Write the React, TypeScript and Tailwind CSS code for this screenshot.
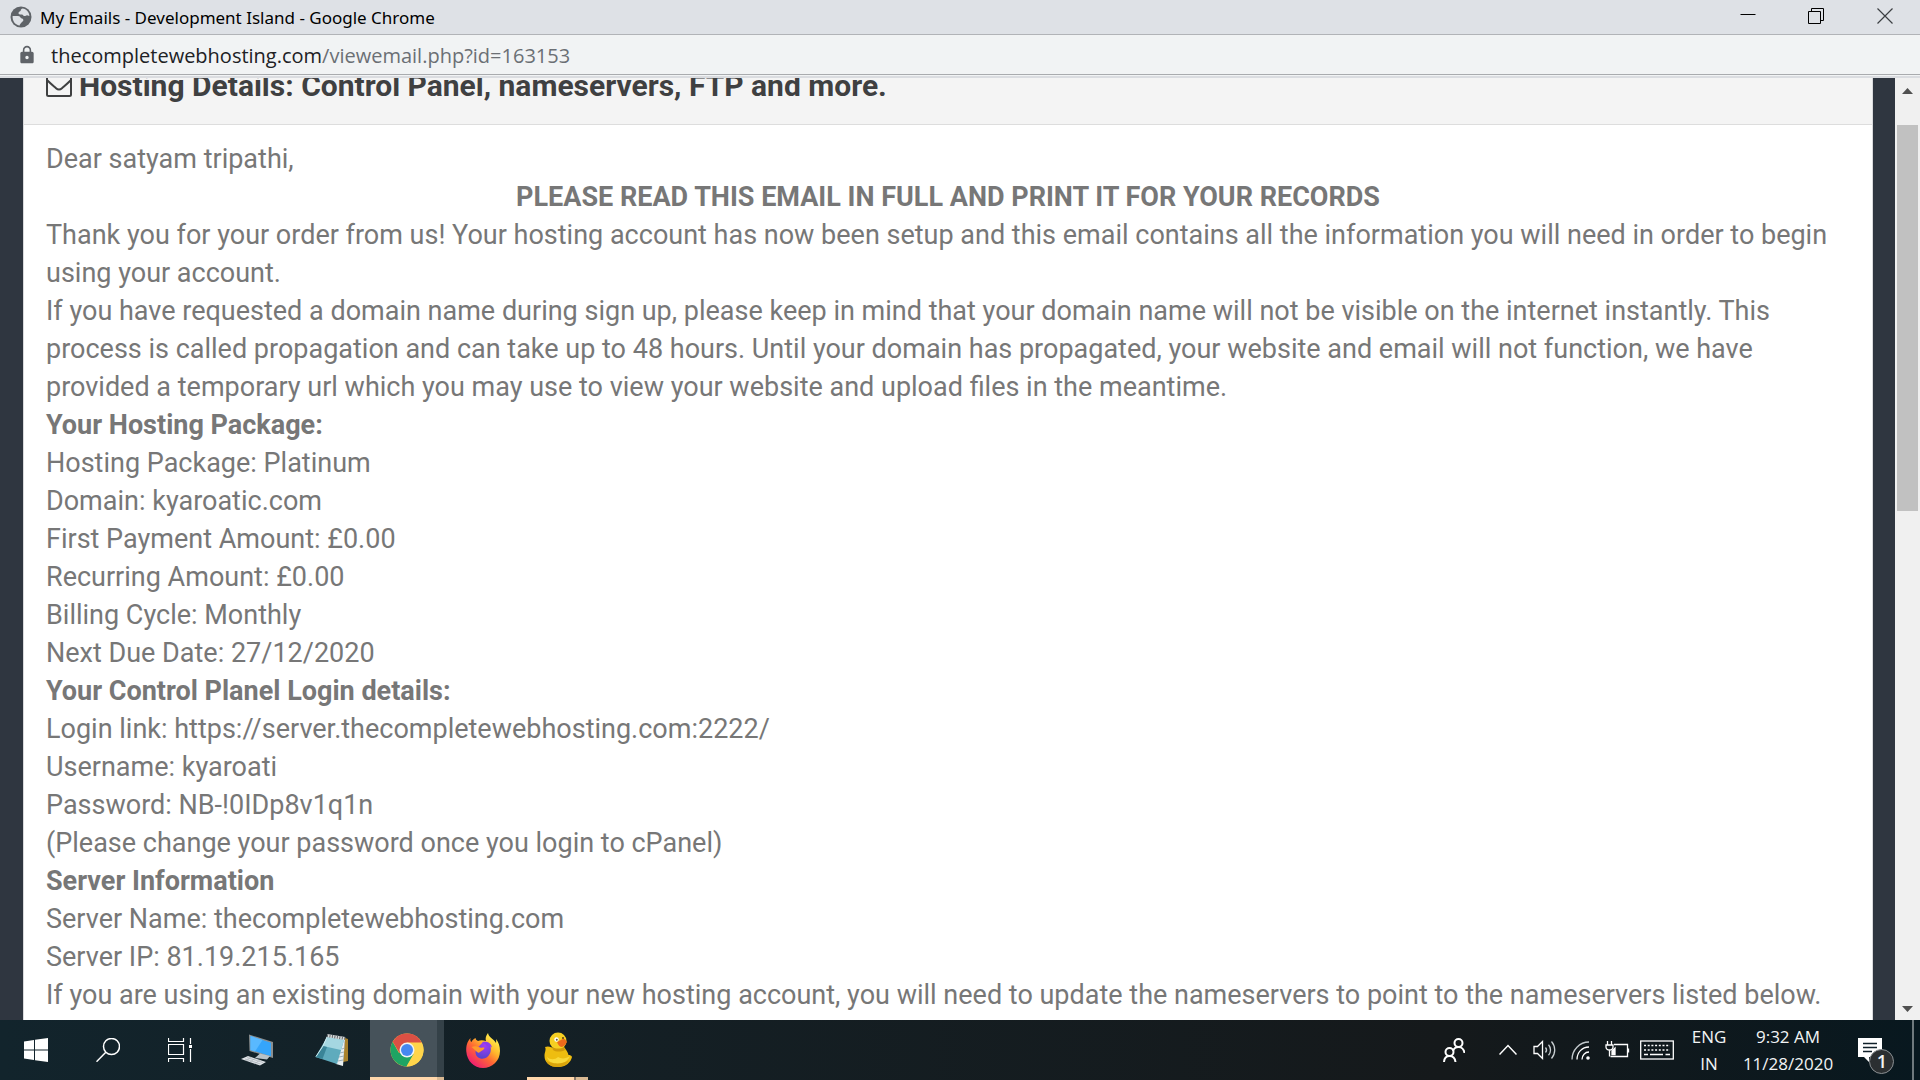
import type { ReactNode } from "react";
import { MdLock } from "react-icons/md";

function Globe() {
  return (
    <svg viewBox="0 0 22 22" className="size-[22px]" aria-hidden="true">
      <circle cx="11" cy="11" r="10.5" fill="#5f6368" />
      <path
        d="M2.600 10h5.400c1.600 0 2.200 1 2.700 1.800.5.800 2 .5 2.500 1.700.6 1.300-.4 2-1.200 2.500-.8.600-.9 1.200-1.500 1.800-.6.600-.7 1-.7 1.700C5.500 19 2.300 15.500 2.600 10zM12.500 2.600c-.9.500-1.700.6-1.700 1.700 0 1-1.200 1-1.800 1.600-.8.700-.6 2 .4 2.400 1 .3 1.500.1 2.500.1 1.300 0 1.300 1.700 2.600 1.700 1.200 0 1.700-1 2.600-.9l2.300.8C19.200 6.500 16.300 2.900 12.500 2.600z"
        fill="#dee1e6"
      />
    </svg>
  );
}

function Envelope() {
  return (
    <svg viewBox="0 0 26 22" className="h-[22px] w-[26px] shrink-0" fill="none" stroke="#3f4041" strokeWidth="2" aria-hidden="true">
      <rect x="1" y="1" width="24" height="20" rx="1.500" />
      <path d="M1.500 5.500c3 3 6 5.500 8.500 7.700 2 1.700 4 1.700 6 0 2.500-2.200 5.500-4.700 8.500-7.700" />
    </svg>
  );
}

function WindowsLogo() {
  return (
    <svg viewBox="0 0 24 24" className="size-6" fill="#fff" aria-hidden="true">
      <path d="M0 3.400 10 2v9.500H0zM11 1.800 24 0v11.500H11zM0 12.500h10V22L0 20.600zM11 12.500h13V24l-13-1.800z" />
    </svg>
  );
}

function SearchIcon() {
  return (
    <svg viewBox="0 0 24 24" className="size-6" fill="none" stroke="#fff" strokeWidth="1.500" aria-hidden="true">
      <circle cx="15.500" cy="8.500" r="8" />
      <path d="M9.800 14.200.5 23.700" />
    </svg>
  );
}

function TaskView() {
  return (
    <svg viewBox="0 0 24 24" className="size-6" fill="none" stroke="#fff" strokeWidth="1.200" aria-hidden="true">
      <path d="M.5 0v3.500h15V0M.5 24v-3.500h15V24M.5 6.500h15v10H.5zM22.500 0v6M22.500 11v13" />
      <rect x="21" y="7" width="3" height="3" fill="#fff" stroke="none" />
    </svg>
  );
}

function Computer() {
  return (
    <svg viewBox="0 0 32 32" className="size-8" aria-hidden="true">
      <path d="m8 .5 24 7.500v16L8.500 17z" fill="#8b8f90" />
      <path d="m9.500 2 20.500 6.700v13.600L9.500 16z" fill="#35a5fb" />
      <path d="m9.500 2 12 4L14 17.400 9.500 16z" fill="#59b9ff" />
      <path d="m19 19.500 10 2.500-3 3.500-12-1.500z" fill="#b9c2c8" />
      <path d="m7 22 18 6-6 3.500L0 25z" fill="#dfe3e7" />
      <path d="m6 23.500 16 5M4 25l15.500 5M10 23l-5 4M14 24.500 9 28M19 26l-5.500 3.800" stroke="#a9b0b6" strokeWidth=".7" />
    </svg>
  );
}

function Notepad() {
  return (
    <svg viewBox="0 0 34 32" className="h-8 w-[34px]" aria-hidden="true">
      <path d="m30 4 3 1v22L28 28z" fill="#a9822c" />
      <path d="m12 2 18 3-2 27-7-2z" fill="#e8eef0" />
      <path d="m27 15 2.500-1M25 19l4-1M24 23l5-1M23 27l5-1" stroke="#9fb0b8" />
      <path d="M12 3 29 6 22 30 .5 23z" fill="#5fabbd" />
      <path d="m12 3 17 3-3 10-18-4z" fill="#a5d7e1" />
      <path d="M8 12 .5 23l7 2L12 13z" fill="#3a8598" />
      <path d="m12 3-4 9-7 10.500" stroke="#d6eef2" fill="none" />
      <path d="m12 1.500 18 3" stroke="#d9dcdc" strokeWidth="3" />
      <path d="m12 1.500 18 3" stroke="#5d6468" strokeWidth="3" strokeDasharray="1 1.500" />
    </svg>
  );
}

function Chrome() {
  return (
    <svg viewBox="0 0 34 34" className="size-[34px]" aria-hidden="true">
      <circle cx="17" cy="17" r="16.500" fill="#ffd54b" />
      <path d="M2.700 8.700A16.500 16.500 0 0 0 16.500 33.500L24.200 21 17 17 9 20z" fill="#1fa463" />
      <path d="M2.700 8.700A16.500 16.500 0 0 1 32.200 10.500L17 10l-7.500 10z" fill="#dc5044" />
      <path d="M17 9.500h14.800A16.500 16.500 0 0 1 16.500 33.500L23.500 21z" fill="#ffd54b" />
      <circle cx="17" cy="17" r="7.500" fill="#f1f3f4" />
      <circle cx="17" cy="17" r="6" fill="#4688f1" />
    </svg>
  );
}

function Firefox() {
  return (
    <svg viewBox="0 0 34 35" className="h-[35px] w-[34px]" aria-hidden="true">
      <defs>
        <linearGradient id="ffBody" x1=".85" y1=".1" x2=".2" y2=".9">
          <stop offset="0" stopColor="#fff44f" />
          <stop offset=".35" stopColor="#ffb62b" />
          <stop offset=".6" stopColor="#ff6a33" />
          <stop offset="1" stopColor="#f0206f" />
        </linearGradient>
        <radialGradient id="ffGlobe" cx=".6" cy=".2" r=".9">
          <stop offset="0" stopColor="#a63cf5" />
          <stop offset="1" stopColor="#4b45c8" />
        </radialGradient>
      </defs>
      <path
        d="M22 0c-2 3-3 5-2 8-3-1-6-1-8 0-2-1-2-1.500-2.500-3C7 6 6 8 5.500 9 4.500 8.500 4 7 4.500 5 1 9 0 13 .3 18.500 1 28 8 35 17 35s17-7 17-17c0-5-1.500-9-4-12 .3 2 .2 3 0 4C27 5 23 5 22 0z"
        fill="url(#ffBody)"
      />
      <path d="M17 9c6-1 9 4 7.500 10-1.500 5-6 7.500-10 6.500-4-1-6-5-4.500-9z" fill="url(#ffGlobe)" />
      <path d="M5.500 14c3-1.500 6-.5 8.500.5 2 .8 4-.5 4.500.5-.5 2-3 2.500-4.500 4-1.500 1-2 1-4-1s-3-3-4.500-4z" fill="#ff9a2c" />
      <path d="M16 9.500c4-2 9 0 10 5-2-2-4-2-5-1.500-1-2-3-3-5-3.500z" fill="#8a3cf0" />
    </svg>
  );
}

function Duck() {
  return (
    <svg viewBox="0 0 28 36" className="h-9 w-7" aria-hidden="true">
      <path d="M1 15c3-1.500 7 0 9 1.500L20 15c2 3 4 5 4.500 8 1.500 0 3 .5 3.500 2-1 5-6 10-14 10C5 35 .5 30 .5 24c0-4 2-6 .5-9z" fill="#eebd10" />
      <path d="M3 25c3 3 8 3 11 0 3 2 8 2 12-1-2 5-7 8-13 8-5 0-9-3-10-7z" fill="#f9d93a" />
      <path d="M2 28c4 4 17 5 23 0-2 5-6 7-12 7S3 32 2 28z" fill="#d9a40b" />
      <circle cx="14" cy="9" r="8.500" fill="#f6cf22" />
      <path d="M8 15c3 2 9 2 12 0l1 3c-4 2-9 2-12 0z" fill="#d19a0a" />
      <path d="M13 10c3-1 4-3 7-3 1.500 0 2 2 3 3-1 1.500-2 4-5 5-2 0-4-2-5-5z" fill="#ee6a1b" />
      <circle cx="12.500" cy="7.500" r="2.200" fill="#fff" />
      <circle cx="12.800" cy="7.800" r="1" fill="#6a5a3a" />
      <circle cx="19" cy="6" r="1" fill="#5b3a10" />
    </svg>
  );
}

function TaskButton({ label, children }: { label: string; children: ReactNode }) {
  return (
    <button aria-label={label} className="flex h-full w-[73px] items-center justify-center">
      {children}
    </button>
  );
}

function Taskbar() {
  return (
    <footer className="flex h-[60px] shrink-0 justify-between bg-linear-to-r from-[#12242c] via-[#15191b] via-75% to-[#08181f] text-[#f2f4f5]">
      <nav aria-label="Taskbar" className="flex">
        <button aria-label="Start" className="flex w-[72px] items-center justify-center"><WindowsLogo /></button>
        <button aria-label="Search" className="flex w-[72px] items-center justify-center"><SearchIcon /></button>
        <button aria-label="Task View" className="flex w-[72px] items-center justify-center"><TaskView /></button>
        <div className="ml-1 flex gap-[2px]">
          <TaskButton label="This PC"><Computer /></TaskButton>
          <TaskButton label="Notepad"><Notepad /></TaskButton>
          <button aria-label="Google Chrome" className="flex w-[74px] flex-col bg-linear-to-r from-[#46525a] from-90% to-[#344148] to-90%">
            <span className="flex w-full flex-1 items-center justify-center pt-[3px]"><Chrome /></span>
            <span className="h-[3px] w-full bg-linear-to-r from-[#ffd7ab] from-90% to-[#d9b993] to-90%" />
          </button>
          <TaskButton label="Firefox"><Firefox /></TaskButton>
          <button aria-label="Cyberduck" className="flex w-[73px] flex-col items-center">
            <span className="flex flex-1 items-center justify-center pt-[3px]"><Duck /></span>
            <span className="flex h-[3px] w-[61px]">
              <span className="flex-1 bg-[#ffd7ab]" />
              <span className="w-[2px] bg-[#86776a]" />
              <span className="w-3 bg-[#d9b993]" />
            </span>
          </button>
        </div>
      </nav>

      <div className="flex font-['Open_Sans','Noto_Sans',sans-serif] text-[17px] leading-[27px]">
        <button aria-label="People" className="mr-3 flex w-12 items-center justify-center">
          <svg viewBox="0 0 22 24" className="h-6 w-[22px]" fill="none" stroke="#fff" strokeWidth="2" aria-hidden="true">
            <circle cx="15.500" cy="5" r="4" />
            <circle cx="6.500" cy="14" r="4" />
            <path d="M10 13c1-3 3-4 5.500-4s5.500 2 6 6M1 24c.3-4 2.500-6 5.500-6s5.500 2 6 6" />
          </svg>
        </button>
        <button aria-label="Show hidden icons" className="flex w-9 items-center justify-center">
          <svg viewBox="0 0 18 12" className="h-3 w-[18px]" fill="none" stroke="#fff" strokeWidth="1.500" aria-hidden="true">
            <path d="m.5 10.500 8.500-9 8.500 9" />
          </svg>
        </button>
        <button aria-label="Volume" className="flex w-9 items-center justify-center">
          <svg viewBox="0 0 23 20" className="h-5 w-[23px]" fill="none" stroke="#fff" strokeWidth="1.300" aria-hidden="true">
            <path d="M1 6.500h3.500L9.500 1.500v17l-5-5H1z" />
            <path d="M12.500 7.500c1.300 1.500 1.300 3.500 0 5M15.500 4.800c2.700 3 2.700 7.400 0 10.400M18.500 1.500c4.300 5 4.300 12 0 17" stroke="#c9cfd2" />
          </svg>
        </button>
        <button aria-label="Wi-Fi" className="flex w-9 items-center justify-center">
          <svg viewBox="0 0 19 19" className="size-[19px]" fill="none" stroke="#fff" strokeWidth="1.300" aria-hidden="true">
            <path d="M1 18.500C1 9 8.500 1 18 1" stroke="#c3cacd" />
            <path d="M6 18.500C6 11.500 11 6 18 6M11 18.500c0-4 3-7.500 7-7.500" />
            <circle cx="17" cy="17" r="1.800" fill="#fff" stroke="none" />
          </svg>
        </button>
        <button aria-label="Battery" className="flex w-[38px] items-center justify-center">
          <svg viewBox="0 0 25 18" className="h-[18px] w-[25px]" fill="none" stroke="#fff" strokeWidth="1.300" aria-hidden="true">
            <path d="M9 3.500h13.500v12H5.500M23.500 7.500v4M2.500 0v4M6.500 0v4M1 4h7v2c0 2-1.500 3-3.500 3S1 8 1 6zM4.500 9v6.500" />
            <path d="M7 13.500V10l3-3v6.500z" fill="#fff" />
          </svg>
        </button>
        <button aria-label="Touch keyboard" className="flex w-[42px] items-center justify-center">
          <svg viewBox="0 0 34 20" className="h-5 w-[34px]" fill="none" stroke="#fff" strokeWidth="1.300" aria-hidden="true">
            <rect x=".7" y="1" width="32.600" height="18" />
            <path d="M4 5.500h26M4 10h26" strokeDasharray="2 1.700" />
            <path d="M4 14.500h4M10 14.500h13M25.500 14.500h4.500" />
          </svg>
        </button>
        <button aria-label="Input language" className="w-[62px] text-center">
          <span className="block">ENG</span>
          <span className="block">IN</span>
        </button>
        <button aria-label="Clock" className="w-24 text-center whitespace-nowrap">
          <span className="block">9:32 AM</span>
          <span className="block">11/28/2020</span>
        </button>
        <button aria-label="Notifications" className="ml-1 flex w-[72px] items-center justify-center pt-3">
          <span className="relative block size-9">
            <svg viewBox="0 0 36 36" className="size-9" aria-hidden="true">
              <path d="M0 0h24v19H11v5l-5-5H0z" fill="#fff" />
              <path d="M5 5.500h14M5 9.500h14M5 13.500h9" stroke="#10202a" strokeWidth="1.300" />
              <circle cx="23.500" cy="23.500" r="12" fill="#2b2f31" stroke="#8b9093" />
            </svg>
            <span className="absolute top-[11px] left-[12px] w-6 text-center text-lg leading-6 font-semibold">1</span>
          </span>
        </button>
        <button aria-label="Show desktop" className="w-2 border-l-2 border-[#6f797d]" />
      </div>
    </footer>
  );
}

function WindowChrome() {
  return (
    <header className="shrink-0">
      <div className="flex h-[35px] items-start justify-between border-b border-[#b1b3b7] bg-[#dee1e6]">
        <div className="flex h-[33px] items-center gap-2 pl-[10px]">
          <Globe />
          <h1 className="pt-[2px] font-['Noto_Sans','Open_Sans',sans-serif] text-[17px] leading-6 text-black">
            My Emails - Development Island - Google Chrome
          </h1>
        </div>
        <div className="flex h-8">
          <button aria-label="Minimize" className="flex w-[68px] items-center justify-center">
            <svg viewBox="0 0 16 16" className="size-4" stroke="#000" aria-hidden="true"><path d="M.5 6.500h15" /></svg>
          </button>
          <button aria-label="Restore" className="flex w-[68px] items-center justify-center">
            <svg viewBox="0 0 16 16" className="size-4" fill="none" stroke="#000" aria-hidden="true">
              <path d="M.5 3.500h12v12H.5zM3.500 3.500v-3h12v12h-3" />
            </svg>
          </button>
          <button aria-label="Close" className="flex w-[70px] items-center justify-center">
            <svg viewBox="0 0 16 16" className="size-4" stroke="#3c3f43" strokeWidth="1.200" aria-hidden="true"><path d="m.5.5 15 15M15.500.5l-15 15" /></svg>
          </button>
        </div>
      </div>
      <div className="flex h-10 items-center gap-[14px] border-b border-[#a9abae] bg-[#f1f3f4] pl-[17px]">
        <MdLock className="size-5 text-[#5f6368]" aria-hidden="true" />
        <p className="pt-[2px] font-['Open_Sans','Noto_Sans',sans-serif] text-[20px] leading-6 text-[#6b6f74]">
          <span className="text-[#202124]">thecompletewebhosting.com</span>/viewemail.php?id=163153
        </p>
      </div>
      <div className="h-[3px] border-t border-[#f1f3f4] bg-[#dadce0]" />
    </header>
  );
}

const packageLines = [
  "Hosting Package: Platinum",
  "Domain: kyaroatic.com",
  "First Payment Amount: £0.00",
  "Recurring Amount: £0.00",
  "Billing Cycle: Monthly",
  "Next Due Date: 27/12/2020",
];

const loginLines = [
  "Login link: https://server.thecompletewebhosting.com:2222/",
  "Username: kyaroati",
  "Password: NB-!0IDp8v1q1n",
  "(Please change your password once you login to cPanel)",
];

const serverLines = ["Server Name: thecompletewebhosting.com", "Server IP: 81.19.215.165"];

function Lines({ title, lines }: { title: string; lines: string[] }) {
  return (
    <section>
      <h3 className="font-bold">{title}</h3>
      {lines.map((line) => (
        <p key={line}>{line}</p>
      ))}
    </section>
  );
}

function Email() {
  return (
    <main className="flex min-w-0 flex-1 flex-col overflow-hidden border-x border-[#d9dadc] bg-white font-[Roboto,sans-serif]">
      <div className="flex h-[47px] shrink-0 items-end gap-[7px] overflow-hidden border-b border-[#dddddd] bg-[#f4f4f4] pl-[22px]">
        <div className="pb-[27px]"><Envelope /></div>
        <h2 className="pb-5 text-[30px] leading-9 font-bold whitespace-nowrap text-[#3f4041]">
          Hosting Details: Control Panel, nameservers, FTP and more.
        </h2>
      </div>
      <article className="px-[22px] pt-[15px] text-[27px] leading-[38px] text-[#777777]">
        <p>Dear satyam tripathi,</p>
        <p className="text-center font-bold">PLEASE READ THIS EMAIL IN FULL AND PRINT IT FOR YOUR RECORDS</p>
        <p>
          Thank you for your order from us! Your hosting account has now been setup and this email contains all the information you will need in order to begin using your account.
        </p>
        <p>
          If you have requested a domain name during sign up, please keep in mind that your domain name will not be visible on the internet instantly. This process is called propagation and can take up to 48 hours. Until your domain has propagated, your website and email will not function, we have provided a temporary url which you may use to view your website and upload files in the meantime.
        </p>
        <Lines title="Your Hosting Package:" lines={packageLines} />
        <Lines title="Your Control Planel Login details:" lines={loginLines} />
        <Lines title="Server Information" lines={serverLines} />
        <p>If you are using an existing domain with your new hosting account, you will need to update the nameservers to point to the nameservers listed below.</p>
      </article>
    </main>
  );
}

function ScrollBar() {
  return (
    <div className="flex w-[25px] shrink-0 flex-col items-center bg-[#f0f0f0]">
      <button aria-label="Scroll up" className="flex h-[47px] w-full shrink-0 justify-center pt-[10px]">
        <svg viewBox="0 0 11 6" className="h-[6px] w-[11px]" fill="#505050" aria-hidden="true"><path d="M0 6 5.500 0 11 6z" /></svg>
      </button>
      <div className="h-[386px] w-[21px] shrink-0 bg-[#c1c1c1]" />
      <div className="flex-1" />
      <button aria-label="Scroll down" className="flex w-full justify-center pb-2">
        <svg viewBox="0 0 11 6" className="h-[6px] w-[11px]" fill="#505050" aria-hidden="true"><path d="M0 0h11L5.500 6z" /></svg>
      </button>
    </div>
  );
}

export default function App() {
  return (
    <div className="flex h-screen flex-col overflow-hidden">
      <WindowChrome />
      <div className="flex min-h-0 flex-1">
        <div className="flex min-w-0 flex-1 bg-[#2f3640] pr-[22px] pl-[23px]">
          <Email />
        </div>
        <ScrollBar />
      </div>
      <Taskbar />
    </div>
  );
}
